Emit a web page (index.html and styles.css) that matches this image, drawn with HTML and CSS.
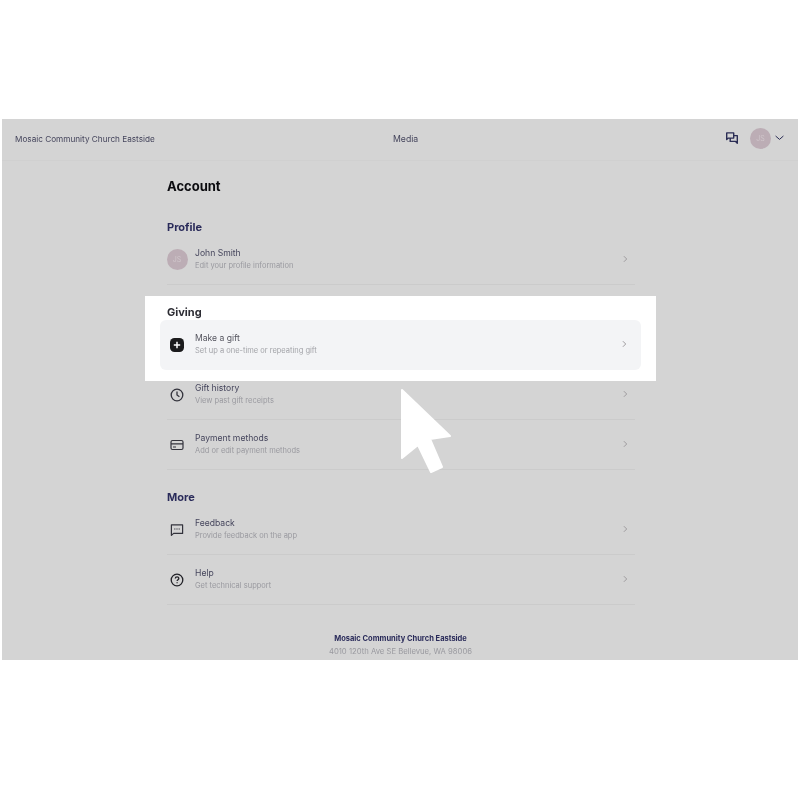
FILE: index.html
```html
<!DOCTYPE html>
<html lang="en">
  <head>
    <meta charset="utf-8" />
    <meta name="viewport" content="width=device-width, initial-scale=1" />
    <title>Account</title>
    <link rel="stylesheet" href="styles.css">
  </head>
  <body>
    <div class="frame">
      <header class="topbar">
        <div class="church">Mosaic Community Church Eastside</div>
        <div class="nav_media">Media</div>
        <div class="top_right">
          <svg class="chat_icon" viewBox="0 0 12 12" width="12" height="12" fill="none" stroke="#2b2d55" stroke-width="1.4" stroke-linejoin="round">
            <path d="M.7 .9h7v5.2H2.4L.7 7.6z" />
            <path d="M7.7 3.6h3.6v7.6L9.6 9.4H4.2V6.1" />
          </svg>
          <div class="avatar">JS</div>
          <svg viewBox="0 0 9 6" width="9" height="6" fill="none" stroke="#2b2d55" stroke-width="1">
            <path d="M.6 1l3.9 3.4L8.4 1" />
          </svg>
        </div>
      </header>

      <main class="content">
        <h1>Account</h1>

        <h2>Profile</h2>
        <div class="row">
          <div class="row_icon"><div class="avatar avatar_small">JS</div></div>
          <div class="row_text">
            <div class="row_title">John Smith</div>
            <div class="row_sub">Edit your profile information</div>
          </div>
          <svg class="chev" viewBox="0 0 6 10" width="5" height="8" fill="none" stroke="#9b989b" stroke-width="1.2"><path d="M1 1.5L4.5 5L1 8.5" /></svg>
        </div>

        <section class="highlight">
          <h2>Giving</h2>
          <div class="row row_active">
            <div class="row_icon">
              <svg viewBox="0 0 14 14" width="14" height="14">
                <rect width="14" height="14" rx="4.5" fill="#1b1b1d" />
                <path d="M7 3.8v6.4M3.8 7h6.4" stroke="#fff" stroke-width="1.5" />
              </svg>
            </div>
            <div class="row_text">
              <div class="row_title">Make a gift</div>
              <div class="row_sub">Set up a one-time or repeating gift</div>
            </div>
            <svg class="chev" viewBox="0 0 6 10" width="5" height="8" fill="none" stroke="#9b989b" stroke-width="1.2"><path d="M1 1.5L4.5 5L1 8.5" /></svg>
          </div>
        </section>

        <div class="row">
          <div class="row_icon">
            <svg viewBox="0 0 14 14" width="14" height="14" fill="none" stroke="#33333c" stroke-width="1.3">
              <circle cx="7" cy="7" r="5.8" />
              <path d="M7 3.6V7l2.4 1.8" />
            </svg>
          </div>
          <div class="row_text">
            <div class="row_title">Gift history</div>
            <div class="row_sub">View past gift receipts</div>
          </div>
          <svg class="chev" viewBox="0 0 6 10" width="5" height="8" fill="none" stroke="#9b989b" stroke-width="1.2"><path d="M1 1.5L4.5 5L1 8.5" /></svg>
        </div>
        <div class="row">
          <div class="row_icon">
            <svg viewBox="0 0 14 12" width="14" height="12" fill="none" stroke="#33333c" stroke-width="1.2">
              <rect x="1" y="1.5" width="12" height="9" rx="1.5" />
              <path d="M1 4.8h12M3 8h3" />
            </svg>
          </div>
          <div class="row_text">
            <div class="row_title">Payment methods</div>
            <div class="row_sub">Add or edit payment methods</div>
          </div>
          <svg class="chev" viewBox="0 0 6 10" width="5" height="8" fill="none" stroke="#9b989b" stroke-width="1.2"><path d="M1 1.5L4.5 5L1 8.5" /></svg>
        </div>

        <h2 class="more">More</h2>
        <div class="row">
          <div class="row_icon">
            <svg viewBox="0 0 14 14" width="14" height="14" fill="none" stroke="#33333c" stroke-width="1.2" stroke-linejoin="round">
              <path d="M1.4 1.8h11.2v8.6H3.6l-2.2 2z" />
              <path d="M4.2 6h1.2M6.4 6h1.2M8.6 6h1.2" />
            </svg>
          </div>
          <div class="row_text">
            <div class="row_title">Feedback</div>
            <div class="row_sub">Provide feedback on the app</div>
          </div>
          <svg class="chev" viewBox="0 0 6 10" width="5" height="8" fill="none" stroke="#9b989b" stroke-width="1.2"><path d="M1 1.5L4.5 5L1 8.5" /></svg>
        </div>
        <div class="row">
          <div class="row_icon">
            <svg viewBox="0 0 14 14" width="14" height="14" fill="none" stroke="#222228" stroke-width="1.3">
              <circle cx="7" cy="7" r="5.8" />
              <path d="M5.3 5.6c0-2.2 3.5-2.2 3.5-.1c0 1.3-1.7 1.3-1.7 2.6" />
              <path d="M7.1 9.3v1" />
            </svg>
          </div>
          <div class="row_text">
            <div class="row_title">Help</div>
            <div class="row_sub">Get technical support</div>
          </div>
          <svg class="chev" viewBox="0 0 6 10" width="5" height="8" fill="none" stroke="#9b989b" stroke-width="1.2"><path d="M1 1.5L4.5 5L1 8.5" /></svg>
        </div>

        <footer class="foot">
          <div class="foot_name">Mosaic Community Church Eastside</div>
          <div class="foot_addr">4010 120th Ave SE Bellevue, WA 98006</div>
        </footer>
      </main>

      <svg class="cursor" viewBox="0 0 60 90" width="60" height="90">
        <path d="M6 5L54 51L34 54L46 82L35 87L22 60L6 73z" fill="#fff" stroke="#fff" stroke-width="2" stroke-linejoin="round" />
      </svg>
    </div>
  </body>
</html>
```

FILE: styles.css
```css
* {
  margin: 0;
  padding: 0;
  box-sizing: border-box;
}
body {
  background: #fff;
  font-family: "Inter", "Liberation Sans", sans-serif;
  padding: 119px 2px 0;
}
.frame {
  position: relative;
  height: 541px;
  overflow: hidden;
  background: #d4d4d4;
  filter: blur(0.4px);
}
.topbar {
  position: relative;
  display: flex;
  align-items: center;
  justify-content: space-between;
  height: 42px;
  padding: 0 14px 3px 13px;
  border-bottom: 1px solid #d0d0d0;
}
.church {
  font-size: 8.2px;
  padding-top: 2px;
  color: #45455c;
}
.nav_media {
  position: absolute;
  left: 391px;
  top: 15px;
  font-size: 8.7px;
  color: #45455c;
}
.top_right {
  display: flex;
  align-items: center;
}
.chat_icon {
  margin-right: 12px;
}
.avatar {
  display: flex;
  align-items: center;
  justify-content: center;
  flex: none;
  width: 21px;
  height: 21px;
  border-radius: 50%;
  background: #bcadb5;
  color: #cfc5ca;
  font-size: 7px;
  margin-right: 4px;
}
.avatar_small {
  margin-right: 0;
}
.content {
  width: 468px;
  margin-left: 165px;
  padding-top: 15px;
}
h1 {
  font-size: 13px;
  line-height: 20px;
  font-weight: 700;
  color: #0c0c10;
}
h2 {
  font-size: 11px;
  line-height: 15px;
  font-weight: 700;
  color: #2a2b5a;
  margin-top: 24px;
}
.row {
  display: flex;
  align-items: center;
  height: 50px;
  border-bottom: 1px solid #cbcbcb;
}
.row_icon {
  display: flex;
  align-items: center;
  justify-content: center;
  width: 20px;
  margin-right: 8px;
  flex: none;
}
.row_icon svg {
  display: block;
}
.row_text {
  flex: 1;
  padding-top: 2px;
}
.row_title {
  font-size: 8.6px;
  line-height: 11px;
  color: #45455c;
}
.row_sub {
  font-size: 7.5px;
  line-height: 14px;
  color: #99999f;
}
.chev {
  margin: 0 7px 2px 0;
}
.highlight {
  position: relative;
  background: #fff;
  margin: 11px -21px -11px -22px;
  padding: 9px 15px 11px 15px;
}
.highlight h2 {
  margin: 0 0 0 7px;
  color: #2c2c33;
}
.row_active {
  background: #f3f4f6;
  border-bottom: 0;
  border-radius: 6px;
  padding: 0 7px;
}
.row_active .row_text {
  padding-top: 0;
}
.row_active .row_title {
  color: #55555f;
}
.row_active .row_sub {
  color: #a2a3a8;
}
.more {
  margin-top: 20px;
}
.foot {
  margin: 27px 1px 0 0;
  text-align: center;
}
.foot_name {
  font-size: 7.5px;
  line-height: 13px;
  font-weight: 700;
  color: #2a2b5a;
}
.foot_addr {
  font-size: 7.7px;
  line-height: 13px;
  color: #99999f;
}
.cursor {
  position: absolute;
  left: 394px;
  top: 266px;
}
```
